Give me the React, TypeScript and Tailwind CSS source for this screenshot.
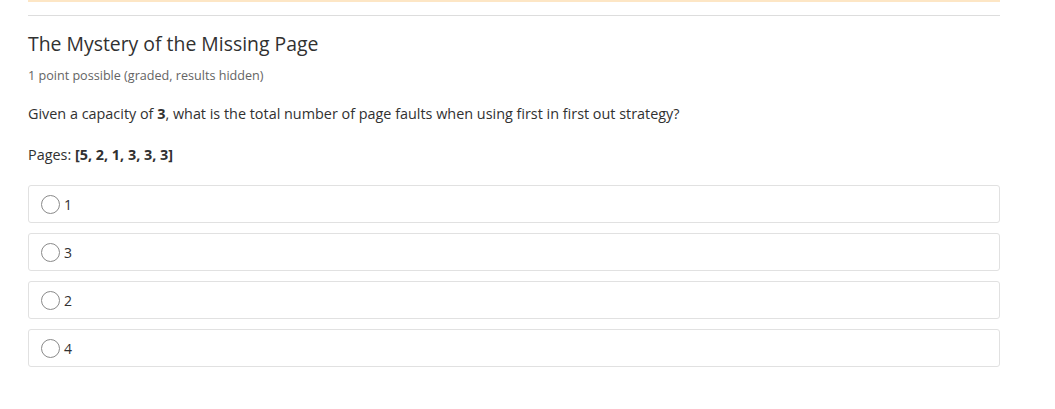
const options = ['1', '3', '2', '4'];

function Option({ label }: { label: string }) {
  return (
    <label className="flex h-[38px] items-center rounded-[3px] border border-[#e1e1e1] pl-[12px]">
      <span className="h-[19px] w-[19px] rounded-full border border-[#8a8a8a] bg-white" />
      <span className="ml-[4px] text-[14px] text-[#313131]">{label}</span>
    </label>
  );
}

export default function App() {
  return (
    <div className="min-h-[409px] bg-white font-['Open_Sans',sans-serif]">
      <div className="ml-[28px] w-[972px]">
        <div className="h-[2px] bg-[#fde6c5]" />
        <div className="mt-[13px] border-t border-[#dddddd]" />
        <h2 className="mt-[15px] text-[19.4px] leading-[26px] text-[#313131]">The Mystery of the Missing Page</h2>
        <div className="mt-[11px] text-[12.6px] leading-[16px] text-[#646464]">1 point possible (graded, results hidden)</div>
        <p className="mt-[20px] text-[14.4px] leading-[20px] text-[#313131]">
          Given a capacity of <b>3</b>, what is the total number of page faults when using first in first out strategy?
        </p>
        <p className="mt-[21px] text-[14.4px] leading-[20px] text-[#313131]">
          Pages: <b>[5, 2, 1, 3, 3, 3]</b>
        </p>
        <div className="mt-[20px] flex flex-col gap-[10px]">
          {options.map((o) => (
            <Option key={o} label={o} />
          ))}
        </div>
      </div>
    </div>
  );
}
